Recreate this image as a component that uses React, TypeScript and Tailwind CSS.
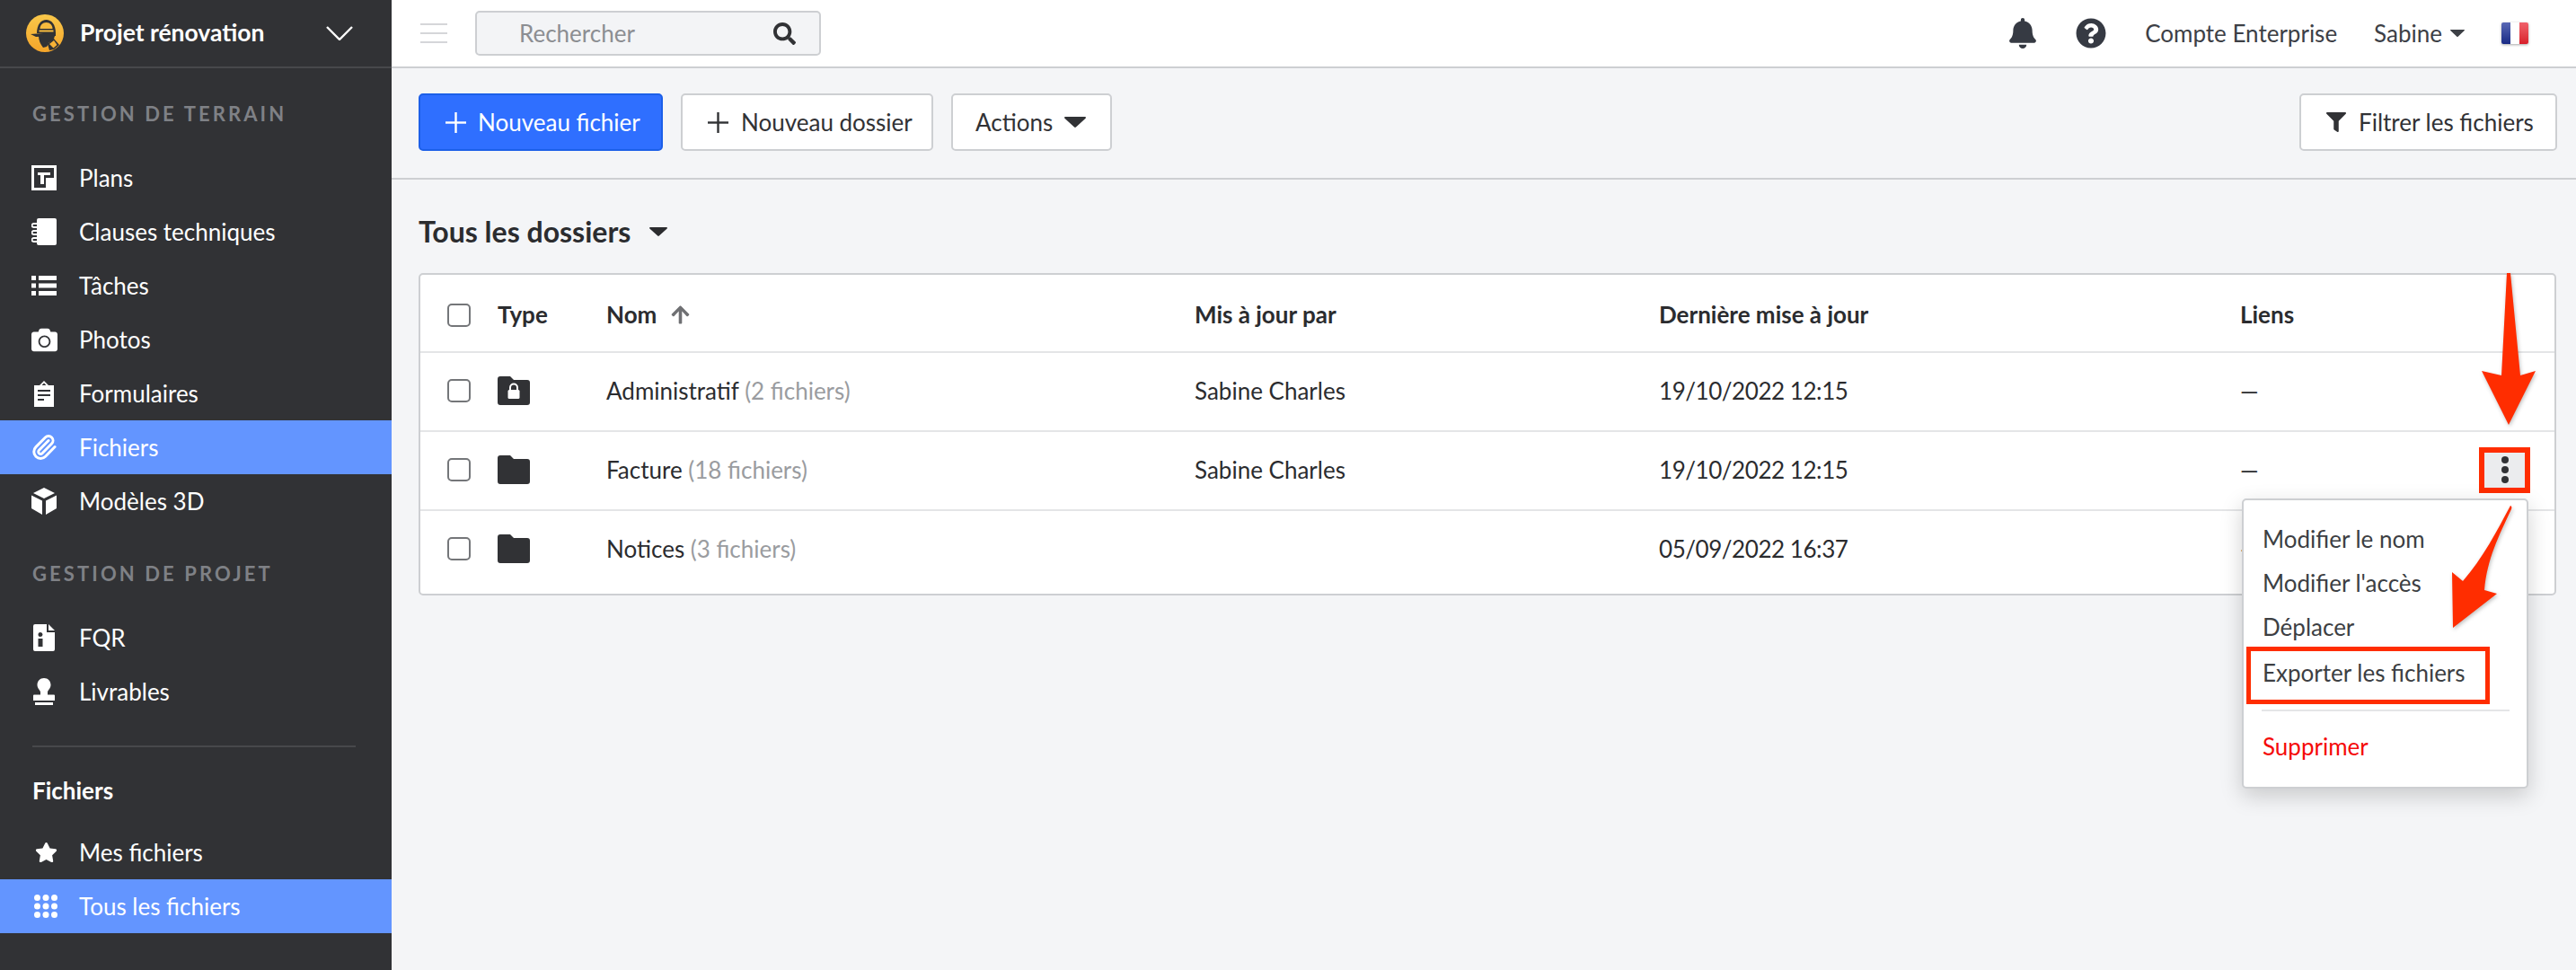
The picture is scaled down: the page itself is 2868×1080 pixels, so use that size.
import { Paperclip } from "lucide-react"
import { FaArrowUp, FaBell, FaCamera, FaFilter, FaQuestionCircle, FaSearch, FaStar } from "react-icons/fa"
import type { ReactNode } from "react"

function Logo() {
  return (
    <svg width="44" height="44" viewBox="0 0 44 44" className="shrink-0">
      <defs>
        <linearGradient id="logoFill" x1="0" y1="0" x2="0" y2="1">
          <stop offset="0" stopColor="#f9c84a" />
          <stop offset="1" stopColor="#f5a52a" />
        </linearGradient>
      </defs>
      <circle cx="22" cy="22" r="21" fill="url(#logoFill)" />
      <path d="M13 22C13 12 18 7 23.500 7S34 12 34 22z" fill="#313235" />
      <path d="M6 23l28-2v4l-22 1z" fill="#313235" />
      <path d="M15 25h18l-2 6-4 1-3 5-4 1c-3-4-5-8-5-13z" fill="#313235" />
      <path d="M25 34l7-6 6 7-6 5-5 1z" fill="#313235" />
      <path d="M27 34l5-4 3.500 5-4 3.500z" fill="#f7b236" />
      <path d="M16.500 17c0-4 3-7 7-7s7 3 7 7z" fill="#f7bb3e" />
      <rect x="15.500" y="18.500" width="16" height="2" fill="#f7bb3e" />
    </svg>
  )
}

function PlansIcon() {
  return (
    <svg width="28" height="28" viewBox="0 0 28 28">
      <rect width="28" height="28" fill="#fff" />
      <path d="M3 3h22v11H16v11H3z" fill="#313235" />
      <path d="M7 8h14v3h-7v10h-4V11H7z" fill="#fff" />
    </svg>
  )
}

function NotebookIcon() {
  return (
    <svg width="28" height="30" viewBox="0 0 28 30" fill="none">
      <path d="M6 2a2 2 0 0 1 2-2h18a2 2 0 0 1 2 2v26a2 2 0 0 1-2 2H8a2 2 0 0 1-2-2z" fill="#fff" />
      <path d="M6 6H2.500a2 2 0 0 0 0 4H7M6 14H2.500a2 2 0 0 0 0 4H7M6 22H2.500a2 2 0 0 0 0 4H7" stroke="#fff" strokeWidth="1.800" />
    </svg>
  )
}

function ListIcon() {
  return (
    <svg width="28" height="22" viewBox="0 0 28 22" fill="#fff">
      <rect width="5" height="5" />
      <rect x="8" width="20" height="5" />
      <rect y="8.500" width="5" height="5" />
      <rect x="8" y="8.500" width="20" height="5" />
      <rect y="17" width="5" height="5" />
      <rect x="8" y="17" width="20" height="5" />
    </svg>
  )
}

function ClipboardIcon() {
  return (
    <svg width="22" height="29" viewBox="0 0 22 29">
      <path fillRule="evenodd" d="M0 5h6l5-5 5 5h6v24H0zM11 2.500L8.500 5h5zM4 10v2h14v-2zM4 15v2h14v-2zM4 20v2h7v-2z" fill="#fff" />
    </svg>
  )
}

function CubeIcon() {
  return (
    <svg width="30" height="30" viewBox="0 0 30 30" fill="#fff">
      <path d="M15 0l12 6-12 6-12-6z" />
      <path d="M1 8.500l12 6V30L1 23z" />
      <path d="M29 8.500l-12 6V30l12-7z" />
    </svg>
  )
}

function FileInfoIcon() {
  return (
    <svg width="24" height="30" viewBox="0 0 24 30">
      <path fillRule="evenodd" d="M2 0h13v9h9v19a2 2 0 0 1-2 2H2a2 2 0 0 1-2-2V2a2 2 0 0 1 2-2zM17 0l7 7h-7zM8 9a2.500 2.500 0 1 0 0 5 2.500 2.500 0 0 0 0-5zM5.500 16v9h5v-9z" fill="#fff" />
    </svg>
  )
}

function StampIcon() {
  return (
    <svg width="24" height="30" viewBox="0 0 24 30" fill="#fff">
      <path d="M12 0c4.500 0 7.500 3.500 7.500 7.500 0 4-3 5.500-3.500 8v3h7a1 1 0 0 1 1 1V25H0v-5.500a1 1 0 0 1 1-1h7v-3c-.5-2.500-3.500-4-3.500-8C4.500 3.500 7.500 0 12 0z" />
      <rect x="2" y="27" width="20" height="3" />
    </svg>
  )
}

function GridIcon() {
  return (
    <svg width="26" height="26" viewBox="0 0 26 26" fill="#fff" className="ml-[4px]">
      {[3.500, 13, 22.500].map(y =>
        [3.500, 13, 22.500].map(x => <circle key={`${x}-${y}`} cx={x} cy={y} r="3.500" />)
      )}
    </svg>
  )
}

function FolderIcon({ locked }: { locked?: boolean }) {
  return (
    <svg width="36" height="32" viewBox="0 0 36 32">
      <path d="M3 0h11l4 4h15a3 3 0 0 1 3 3v22a3 3 0 0 1-3 3H3a3 3 0 0 1-3-3V3a3 3 0 0 1 3-3z" fill="#313235" />
      {locked && (
        <>
          <path d="M14 15v-2.500a4 4 0 0 1 8 0V15" fill="none" stroke="#fff" strokeWidth="2" />
          <rect x="11.500" y="15" width="13" height="10" rx="1.500" fill="#fff" />
        </>
      )}
    </svg>
  )
}

function PlusIcon() {
  return (
    <svg width="23" height="23" viewBox="0 0 23 23" fill="currentColor">
      <rect x="10.300" width="2.400" height="23" />
      <rect y="10.300" width="23" height="2.400" />
    </svg>
  )
}

function Caret({ width }: { width: number }) {
  return (
    <svg width={width} height={width / 2} viewBox="0 0 20 10" fill="currentColor">
      <path d="M1 0h18c1 0 1.300.8.700 1.400l-8.900 8.200c-.5.500-1.100.5-1.600 0L.3 1.400C-.3.800 0 0 1 0z" />
    </svg>
  )
}

function NavItem({ icon, label, active }: { icon: ReactNode; label: string; active?: boolean }) {
  return (
    <div className={`flex h-[60px] items-center gap-[24px] pl-[34px] text-[26px] text-white ${active ? "bg-[#6395ff]" : ""}`}>
      <span className="flex w-[30px] justify-center">{icon}</span>
      {label}
    </div>
  )
}

function SectionLabel({ children }: { children: string }) {
  return (
    <div className="mt-[36px] mb-[26px] h-[30px] pl-[36px] text-[22px] leading-[30px] font-bold tracking-[3.100px] text-[#7f8186]">
      {children}
    </div>
  )
}

function Sidebar() {
  return (
    <aside className="flex w-[436px] shrink-0 flex-col bg-[#313235]">
      <div className="flex h-[76px] items-center border-b-2 border-[#47484b] pr-[43px] pl-[28px]">
        <Logo />
        <span className="ml-[17px] flex-1 text-[26.500px] font-bold text-white">Projet rénovation</span>
        <svg width="30" height="16" viewBox="0 0 30 16" fill="none" stroke="#fff" strokeWidth="2.400">
          <path d="M1 1l14 14L29 1" />
        </svg>
      </div>
      <SectionLabel>GESTION DE TERRAIN</SectionLabel>
      <NavItem icon={<PlansIcon />} label="Plans" />
      <NavItem icon={<NotebookIcon />} label="Clauses techniques" />
      <NavItem icon={<ListIcon />} label="Tâches" />
      <NavItem icon={<FaCamera size={29} />} label="Photos" />
      <NavItem icon={<ClipboardIcon />} label="Formulaires" />
      <NavItem icon={<Paperclip size={32} strokeWidth={2.400} />} label="Fichiers" active />
      <NavItem icon={<CubeIcon />} label="Modèles 3D" />
      <SectionLabel>GESTION DE PROJET</SectionLabel>
      <NavItem icon={<FileInfoIcon />} label="FQR" />
      <NavItem icon={<StampIcon />} label="Livrables" />
      <div className="mx-[36px] mt-[30px] h-[2px] w-[360px] bg-[#47484b]" />
      <div className="mt-[33px] h-[30px] pl-[36px] text-[26px] leading-[30px] font-bold text-white">Fichiers</div>
      <div className="mt-[24px]">
        <NavItem icon={<FaStar size={28} className="ml-[5px]" />} label="Mes fichiers" />
        <NavItem icon={<GridIcon />} label="Tous les fichiers" active />
      </div>
    </aside>
  )
}

function TopBar() {
  return (
    <header className="flex h-[76px] items-center border-b-2 border-[#cdcfd2] bg-white pr-[53px] pl-[32px]">
      <div className="flex w-[30px] flex-col gap-[8px]">
        <div className="h-[2px] bg-[#d5d6d9]" />
        <div className="h-[2px] bg-[#d5d6d9]" />
        <div className="h-[2px] bg-[#d5d6d9]" />
      </div>
      <div className="ml-[31px] flex h-[50px] w-[385px] items-center justify-between rounded-[5px] border-2 border-[#cdcfd2] bg-[#f3f4f6] pr-[26px] pl-[47px] text-[26px] text-[#8c8e92]">
        Rechercher
        <FaSearch size={25} className="text-[#313235]" />
      </div>
      <div className="ml-auto flex items-center text-[26px] text-[#3d4046]">
        <FaBell size={34} className="text-[#363a43]" />
        <FaQuestionCircle size={34} className="ml-[42px] text-[#363a43]" />
        <span className="ml-[43px]">Compte Enterprise</span>
        <span className="ml-[41px]">Sabine</span>
        <span className="ml-[9px]">
          <Caret width={16} />
        </span>
        <div className="ml-[41px] flex h-[24px] w-[30px] overflow-hidden rounded-[2px] shadow-[0_1px_3px_rgba(0,0,0,0.35)]">
          <div className="flex-1 bg-linear-to-b from-[#5a68b5] to-[#1a2a85]" />
          <div className="flex-1 bg-white" />
          <div className="flex-1 bg-linear-to-b from-[#f0606a] to-[#d81c2a]" />
        </div>
      </div>
    </header>
  )
}

function Toolbar() {
  return (
    <div className="flex h-[124px] items-start gap-[20px] border-b-2 border-[#cdcfd2] pt-[28px] pr-[21px] pl-[30px] text-[26px]">
      <button className="flex h-[64px] w-[272px] items-center gap-[13px] rounded-[5px] border-2 border-[#1c5fe8] bg-[#2f6fff] pl-[28px] text-white">
        <PlusIcon />
        Nouveau fichier
      </button>
      <button className="flex h-[64px] w-[281px] items-center gap-[14px] rounded-[5px] border-2 border-[#cdcfd2] bg-white pl-[28px] text-[#313235]">
        <PlusIcon />
        Nouveau dossier
      </button>
      <button className="flex h-[64px] w-[179px] items-center gap-[13px] rounded-[5px] border-2 border-[#cdcfd2] bg-white pl-[25px] text-[#313235]">
        Actions
        <Caret width={24} />
      </button>
      <button className="ml-auto flex h-[64px] w-[287px] items-center gap-[14px] rounded-[5px] border-2 border-[#cdcfd2] bg-white pl-[28px] text-[#313235]">
        <FaFilter size={22} />
        Filtrer les fichiers
      </button>
    </div>
  )
}

const gridCols = "grid grid-cols-[86px_121px_655px_517px_647px_1fr] items-center"

function Checkbox() {
  return (
    <div className="ml-[30px] h-[26px] w-[26px] rounded-[5px] border-2 border-[#747679] bg-white" />
  )
}

type Row = { locked?: boolean; name: string; count: string; by: string; date: string; actions?: boolean; last?: boolean }

const rows: Row[] = [
  { locked: true, name: "Administratif", count: "(2 fichiers)", by: "Sabine Charles", date: "19/10/2022 12:15" },
  { name: "Facture", count: "(18 fichiers)", by: "Sabine Charles", date: "19/10/2022 12:15", actions: true },
  { name: "Notices", count: "(3 fichiers)", by: "", date: "05/09/2022 16:37", last: true },
]

function TableRow({ row }: { row: Row }) {
  return (
    <div className={`${gridCols} ${row.last ? "h-[92px] pb-[8px]" : "h-[88px] border-b-2 border-[#e4e5e7] pb-[2px]"} text-[26px] text-[#2b2c2f]`}>
      <Checkbox />
      <FolderIcon locked={row.locked} />
      <div>
        {row.name} <span className="text-[#9a9ca0]">{row.count}</span>
      </div>
      <div>{row.by}</div>
      <div className="tracking-[-0.45px]">{row.date}</div>
      <div className="flex items-center justify-between pr-[27px]">
        <span>—</span>
        {row.actions && (
          <div className="flex h-[51px] w-[57px] flex-col items-center justify-center gap-[3px] border-[6px] border-[#ff2d00] bg-[#ebecee]">
            <span className="h-[8px] w-[8px] rounded-full bg-[#313235]" />
            <span className="h-[8px] w-[8px] rounded-full bg-[#313235]" />
            <span className="h-[8px] w-[8px] rounded-full bg-[#313235]" />
          </div>
        )}
      </div>
    </div>
  )
}

function FilesTable() {
  return (
    <div className="w-[2380px] rounded-[5px] border-2 border-[#cdcfd2] bg-white">
      <div className={`${gridCols} h-[87px] border-b-2 border-[#e4e5e7] pt-[4px] text-[26px] font-bold text-[#2b2c2f]`}>
        <Checkbox />
        <div>Type</div>
        <div className="flex items-center gap-[15px]">
          Nom
          <FaArrowUp size={23} className="text-[#6f7073]" />
        </div>
        <div>Mis à jour par</div>
        <div>Dernière mise à jour</div>
        <div>Liens</div>
      </div>
      {rows.map(row => (
        <TableRow key={row.name} row={row} />
      ))}
    </div>
  )
}

function RowMenu() {
  return (
    <div className="absolute top-[555px] left-[2496px] h-[323px] w-[319px] rounded-[5px] border-2 border-[#cdcfd2] bg-white text-[26px] text-[#3d3f43] shadow-[0_8px_24px_rgba(0,0,0,0.18)]">
      <div className="mt-[19px] flex flex-col pl-[21px]">
        <div className="flex h-[49px] items-center">Modifier le nom</div>
        <div className="flex h-[49px] items-center">Modifier l'accès</div>
        <div className="flex h-[49px] items-center">Déplacer</div>
        <div className="-mt-[3px] -ml-[18px] flex h-[64px] w-[271px] items-center border-[5px] border-[#ff2d00] pb-[5px] pl-[13px]">Exporter les fichiers</div>
      </div>
      <div className="mt-[6px] mr-[19px] ml-[20px] h-[2px] bg-[#e4e5e7]" />
      <div className="mt-[20px] pl-[21px] text-[#f50a0a]">Supprimer</div>
    </div>
  )
}

function Arrows() {
  return (
    <svg width="2868" height="1080" viewBox="0 0 2868 1080" className="pointer-events-none absolute top-0 left-0">
      <g fill="#ff2d00" style={{ filter: "drop-shadow(1px 2px 2px rgba(0,0,0,0.25))" }}>
        <path d="M2791 304h4l11 114 17-5-30 60-30-60 22 5z" />
        <path d="M2795 563c1 0 2 2 1 4-14 30-27 55-30 90l14 4-49 38-1-62 12 10c22-25 38-56 53-84z" />
      </g>
    </svg>
  )
}

export default function App() {
  return (
    <div className="relative flex h-[1080px] w-full overflow-hidden bg-[#f4f5f7] font-[Lato,sans-serif]">
      <Sidebar />
      <main className="flex min-w-0 flex-1 flex-col">
        <TopBar />
        <Toolbar />
        <div className="px-[30px] pt-[38px]">
          <div className="mb-[26px] flex h-[40px] items-center gap-[21px] text-[32px] font-bold text-[#2b2c2f]">
            Tous les dossiers
            <Caret width={20} />
          </div>
          <FilesTable />
        </div>
      </main>
      <RowMenu />
      <Arrows />
    </div>
  )
}
